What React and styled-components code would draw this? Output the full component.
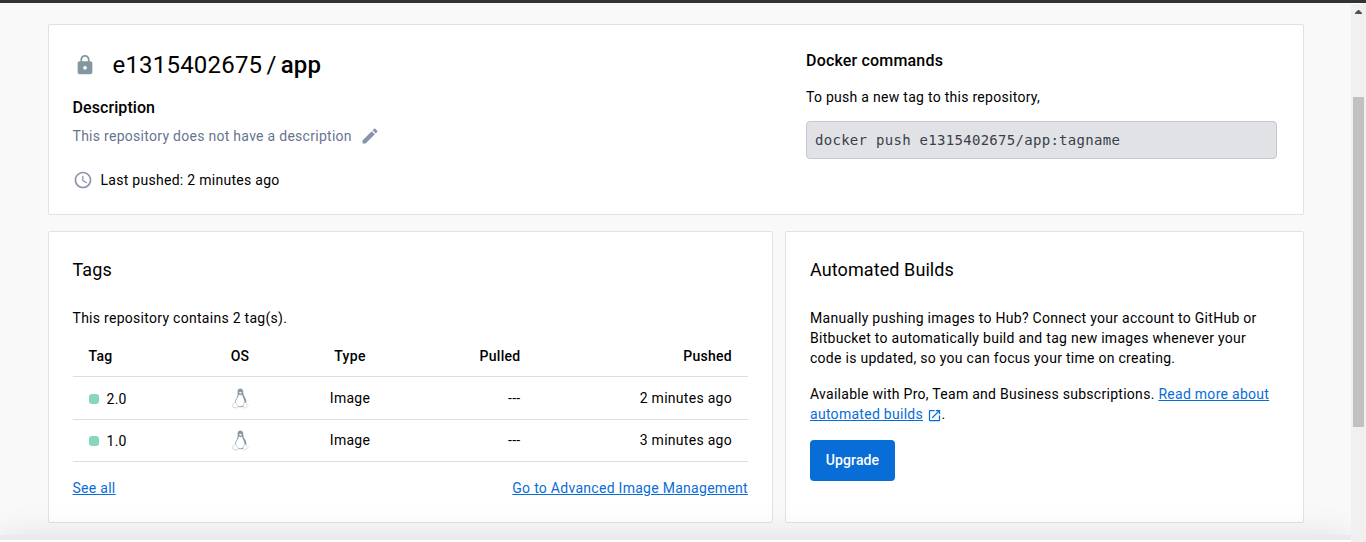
import React from "react";
import styled, { createGlobalStyle } from "styled-components";
import { MdLock, MdEdit, MdAccessTime, MdOpenInNew } from "react-icons/md";

const GlobalStyle = createGlobalStyle`
  * { box-sizing: border-box; }
  html, body, #root { height: 100%; }
  body { margin: 0; overflow: hidden; background: #fff; color: #000;
    font-family: Roboto, sans-serif; font-size: 14px; line-height: 20px; letter-spacing: 0.28px; }
  h1, h2, h3, p, pre { margin: 0; }
`;

const Page = styled.div`
  position: relative;
  display: grid;
  grid-template-columns: 1fr 15px;
  grid-template-rows: 3px 537px;
  height: 540px;
`;
const TopBar = styled.div`
  grid-column: 1 / -1;
  background: #333;
`;
const Content = styled.main`
  padding: 21px 47px 0 48px;
  background: #f9f9f9;
  display: flex;
  flex-direction: column;
  gap: 16px;
  overflow: hidden;
`;
const Card = styled.section`
  flex: none;
  background: #fff;
  border: 1px solid #e1e2e6;
  border-radius: 2px;
`;
const HeaderCard = styled(Card)`
  display: flex;
  justify-content: space-between;
  height: 191px;
  padding: 25px 26px 0 23.5px;
`;
const Row = styled.div`
  display: flex;
  gap: 12px;
`;
const TagsCard = styled(Card)`
  width: 725px;
  height: 292px;
  padding: 27px 24px 0 23.5px;
`;
const BuildsCard = styled(Card)`
  width: 519px;
  height: 292px;
  padding: 27px 24px 0;
`;
const TitleLine = styled.div`
  display: flex;
  align-items: center;
  height: 30px;
`;
const LockIcon = styled(MdLock)`
  margin: 0 1.5px;
  color: #8497a0;
`;
const RepoName = styled.h1`
  margin-left: 15px;
  font-size: 24px;
  line-height: 30px;
  font-weight: 400;
  letter-spacing: 0.2px;
  word-spacing: -2px;
  b { font-weight: 500; }
`;
const Subtitle = styled.h3`
  margin-top: ${(p) => p.$top}px;
  font-size: 16px;
  line-height: 20px;
  font-weight: 500;
  letter-spacing: ${(p) => p.$spacing}px;
`;
const CardTitle = styled.h2`
  font-size: 18px;
  line-height: 22px;
  font-weight: 400;
  letter-spacing: 0.09px;
`;
const Muted = styled.div`
  display: flex;
  align-items: center;
  gap: 8px;
  margin-top: 8px;
  color: #677490;
  svg { color: #8993ab; }
`;
const Pushed = styled.div`
  display: flex;
  align-items: center;
  gap: 8px;
  margin-top: 24px;
  svg { color: #8993ab; }
`;
const Commands = styled.div`
  width: 471px;
  padding-top: 1px;
`;
const Code = styled.pre`
  margin-top: 14px;
  height: 38px;
  padding: 0 8px;
  border: 1px solid #c4c8d1;
  border-radius: 4px;
  background: #e1e2e6;
  color: #393f49;
  font-family: "DejaVu Sans Mono", monospace;
  font-size: 14px;
  line-height: 36px;
  letter-spacing: 0.29px;
`;
const Text = styled.p`
  margin-top: ${(p) => p.$top}px;
`;
const Table = styled.div`
  margin-top: 8px;
`;
const TableRow = styled.div`
  display: grid;
  grid-template-columns: 103.5px 96px 124px 108.5px 1fr;
  align-items: center;
  height: ${(p) => p.$height}px;
  padding: 0 16px;
  border-bottom: 1px solid #dddee0;
  font-weight: ${(p) => (p.$head ? 500 : 400)};
`;
const Cell = styled.div`
  display: flex;
  align-items: center;
  height: 20px;
  justify-content: ${(p) => p.$align || "flex-start"};
`;
const NameCell = styled(Cell)`
  height: 21px;
  padding-top: 1px;
`;
const BodyRow = styled(TableRow)`
  align-items: start;
  padding-top: ${(p) => p.$height - 32}px;
`;
const Status = styled.i`
  width: 10px;
  height: 10px;
  margin-right: 8px;
  border-radius: 3px;
  background: #87d6c0;
`;
const Links = styled.div`
  display: flex;
  justify-content: space-between;
  margin-top: 16px;
`;
const Link = styled.a`
  color: #086dd7;
  text-decoration: underline;
`;
const ExternalIcon = styled(MdOpenInNew)`
  margin-left: 3.5px;
  color: #086dd7;
  vertical-align: -4px;
`;
const Button = styled.button`
  display: block;
  width: 85px;
  height: 41px;
  margin-top: 16px;
  padding: 0 0 1px;
  border: 0;
  border-radius: 4px;
  background: #086dd7;
  color: #fff;
  font: 500 14px/20px Roboto, sans-serif;
  letter-spacing: 0.1px;
`;
const Scrollbar = styled.div`
  margin-top: 1px;
  height: 538px;
  padding: 6px 2px 0;
  background: #f0f0f0;
  svg { display: block; margin: 0 auto; }
`;
const Thumb = styled.div`
  width: 11px;
  height: 330px;
  margin-top: 83px;
  background: #c1c1c1;
`;
const BottomOverlay = styled.div`
  position: absolute;
  left: 0;
  right: 15px;
  bottom: 0;
  height: 45px;
  padding-top: 40px;
  overflow: hidden;
  pointer-events: none;
`;
const BottomPanel = styled.div`
  height: 80px;
  background: #e9eaec;
  box-shadow: 0 0 32px rgba(0, 0, 0, 0.1);
`;

const Penguin = () => (
  <svg width="17" height="21" viewBox="0 0 17 21">
    <path d="M5.6 4.3C5.4 1.9 6.6.6 8.3.6s3 1.2 3 3.500c0 2.700.7 3.900 2 5.800 1 1.500 1.500 4 .7 5.700l-2 2.600c-1.900 1.400-5 1.400-6.800 0l-2-3c-.8-2.400 1.100-4.400 1.800-6.200.6-1.500.7-2.800.6-4.700z" fill="#8799a3" />
    <path d="M7 6.500l1.500.8L10 6.400c.4 2.400 2.300 4.400 2.500 7.100.1 1.700-.5 3.100-1.300 4.100-1.400 1-4 1-5.500.2L3.600 14.500c-.2-2.200 2.500-4.900 3.400-8z" fill="#fff" />
    <path d="M6.700 4.600l1.700-.8 1.600.8-1.500 1.300z" fill="#e8edef" />
    <path d="M3.400 14l2.900 4.100c.4 1.500-.7 2.200-2.100 1.800L1 19.200c-.8-.4-.1-1.400-.3-2.500.1-.8 1-.8 1.500-1.200zM13.400 14.300l1 1.300c.3.900 1.600 1.300 1.700 2-.4 1-1.600 1.200-2.400 2-.9.800-2.400.5-2.500-.9.200-1.500.1-3.600 2.200-4.400z" fill="#fff" stroke="#b5c0c6" strokeWidth=".6" />
  </svg>
);

const TAGS = [
  { name: "2.0", pushed: "2 minutes ago", height: 43 },
  { name: "1.0", pushed: "3 minutes ago", height: 42 },
];

export default function App() {
  return (
    <Page>
      <GlobalStyle />
      <TopBar />
      <Content>
        <HeaderCard>
          <div>
            <TitleLine>
              <LockIcon size={22} />
              <RepoName>e1315402675 / <b>app</b></RepoName>
            </TitleLine>
            <Subtitle $top={18} $spacing={0.08}>Description</Subtitle>
            <Muted>This repository does not have a description<MdEdit size={20} /></Muted>
            <Pushed><MdAccessTime size={20} />Last pushed: 2 minutes ago</Pushed>
          </div>
          <Commands>
            <Subtitle $top={0} $spacing={0.18}>Docker commands</Subtitle>
            <Text $top={16}>To push a new tag to this repository,</Text>
            <Code>docker push e1315402675/app:tagname</Code>
          </Commands>
        </HeaderCard>
        <Row>
          <TagsCard>
            <CardTitle>Tags</CardTitle>
            <Text $top={27}>This repository contains 2 tag(s).</Text>
            <Table>
              <TableRow $head $height={41}>
                <Cell>Tag</Cell>
                <Cell $align="center">OS</Cell>
                <Cell $align="center">Type</Cell>
                <Cell $align="flex-end">Pulled</Cell>
                <Cell $align="flex-end">Pushed</Cell>
              </TableRow>
              {TAGS.map((t) => (
                <BodyRow key={t.name} $height={t.height}>
                  <NameCell><Status />{t.name}</NameCell>
                  <Cell $align="center"><Penguin /></Cell>
                  <Cell $align="center">Image</Cell>
                  <Cell $align="flex-end">---</Cell>
                  <Cell $align="flex-end">{t.pushed}</Cell>
                </BodyRow>
              ))}
            </Table>
            <Links>
              <Link>See all</Link>
              <Link>Go to Advanced Image Management</Link>
            </Links>
          </TagsCard>
          <BuildsCard>
            <CardTitle>Automated Builds</CardTitle>
            <Text $top={27}>
              Manually pushing images to Hub? Connect your account to GitHub or Bitbucket to automatically build and tag new images whenever your code is updated, so you can focus your time on creating.
            </Text>
            <Text $top={16}>
              Available with Pro, Team and Business subscriptions. <Link>Read more about automated builds</Link>
              <ExternalIcon size={15} />.
            </Text>
            <Button>Upgrade</Button>
          </BuildsCard>
        </Row>
      </Content>
      <Scrollbar>
        <svg width="7" height="4" viewBox="0 0 7 4"><path d="M0 4V3L3 0h1l3 3v1z" fill="#505050" /></svg>
        <Thumb />
      </Scrollbar>
      <BottomOverlay><BottomPanel /></BottomOverlay>
    </Page>
  );
}
